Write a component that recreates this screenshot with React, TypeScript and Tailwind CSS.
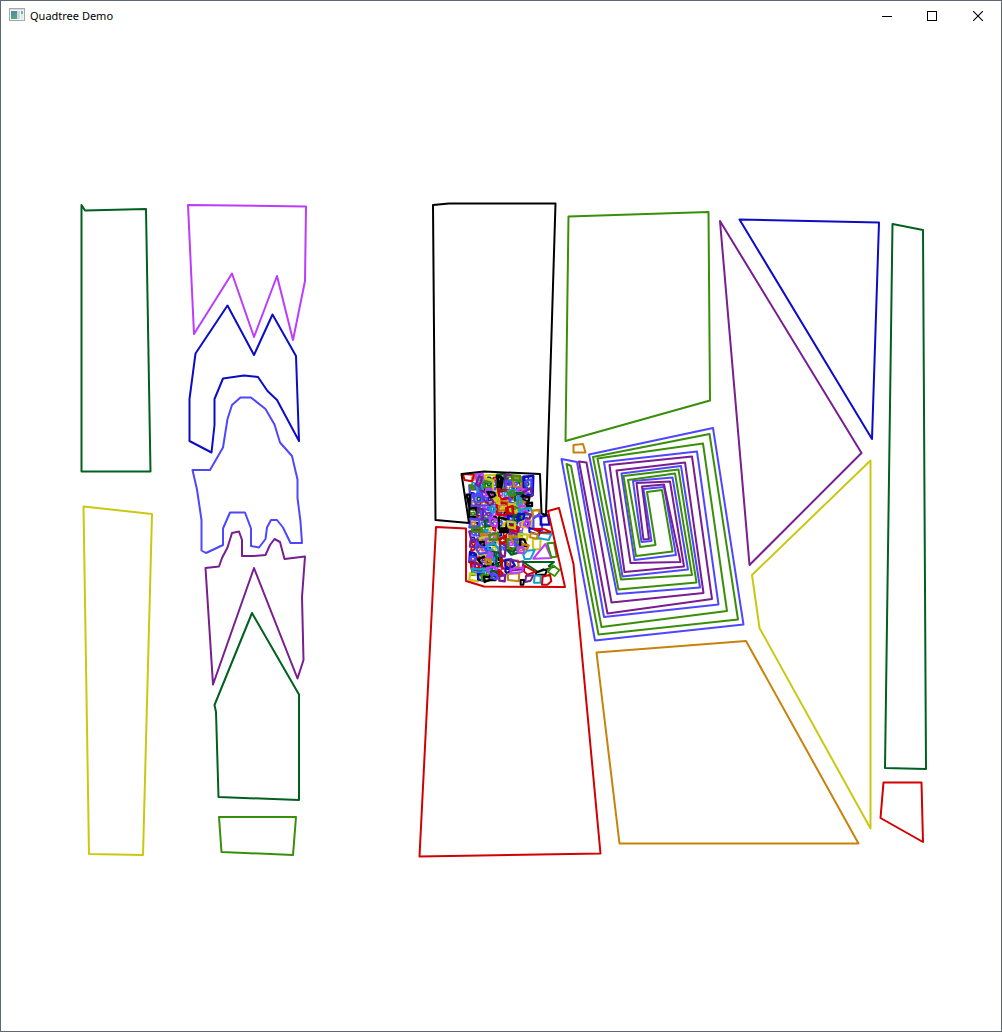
const INK = {
  black: "#000000",
  red: "#d20000",
  forest: "#006020",
  green: "#3a8f0a",
  olive: "#cbc814",
  orange: "#c8820c",
  navy: "#0c0cc8",
  blue: "#4f46ff",
  purple: "#781e91",
  magenta: "#bb3cff",
  cyan: "#14a0c8",
};

type Ink = keyof typeof INK;
type Shape = [Ink, string];

const SHAPES: Shape[] = [
  ["forest", "81.5,205 85,210.5 146,209 150.5,471.5 81.5,471.5"],
  ["olive", "83.5,506.5 152,514 143,855 89,854"],
  ["magenta", "188,205 306,206.5 305,281 293,340 277,276 254,337 232,273.5 194,334"],
  ["navy", "195.5,353.5 227.5,305.5 254,355 272.5,314.5 296,356 299,441 277,400 267.5,391 258,377 244,375.5 223,378.5 214.5,399 214.5,425 211.5,452.5 189.5,441 189.5,399"],
  ["blue", "240.5,397.5 251,397.5 265.5,409 274.5,424.5 280,442.5 292,456 297.5,479.5 297.5,498 300.5,521.5 302,543 290.5,543 283,527.5 277,520 271,520 267,527.5 265.5,539 259,547.5 251,546 251,528.5 245,512.5 230,512.5 223,528.5 223,545 206,553 201.5,550.5 201.5,520 197,489.5 192.5,470 210,470 223,447.5 227.5,419 232,405"],
  ["purple", "205.5,568 219,566.5 222,558 227.5,547.5 232,533 239,531.5 242,540 242,556 254,556 265.5,555 270,545 274.5,539 280,542 284.5,559 305,556.5 302,597 303.5,660 297.5,678.5 254,568 213,684.5"],
  ["forest", "252,613 299,694.5 299,800 218.5,797 216,712 214.5,705"],
  ["green", "219,817 296,817 293,855 221.5,852"],
  ["black", "433,205 449,203.5 555.5,203.5 546,515 541.5,513.5 540,474 484,471.5 461.5,474 469,523 435.5,520"],
  ["red", "436,527 466,528.5 466,581 484,586.5 565,587 548,511 559,508 573.5,564 600.5,853.5 419.5,856.5"],
  ["green", "568.5,216.5 708.5,212 710,400.5 565.5,441"],
  ["purple", "720,221 861.5,453 749.5,565"],
  ["navy", "739.5,219.5 879,222.5 872,439"],
  ["olive", "870.5,460.5 870.5,828.5 759.5,628 752,575"],
  ["forest", "892.5,224 923,230 926,769 885,768"],
  ["red", "883.5,782.5 921.5,782.5 923,842 880.5,818"],
  ["orange", "596.5,652.5 746,641 858.5,843.5 619.5,843.5"],
  ["orange", "573.5,445 583,444 585.5,452.5 573.5,452.5"],
];

const SPIRAL: Shape[] = [
  ["blue", "561.5,459 595,640.5 743.5,624.5 713,428 589,454.5 617,594 700,587.5 681,466 621.5,473.5 634.5,560 676,555 664,487 643.5,489 651.5,541 641.5,542 633,481 672.5,477.5 688,569.5 622.5,576.5 604,462 697,451.5 718.5,604.5 604,617 577,462"],
  ["green", "566.5,464 598.5,634.5 738,619.5 709.5,434 593,457 618.5,589.5 696.5,582.5 678.5,469.5 623.5,476 636,556 672.5,551.5 662,490 647,492 655.5,545 640,547 628,480 675,473.5 692,575 621,579.5 597.5,458.5 703,443.5 727,611 601.5,627 571,466"],
  ["purple", "579,461.5 607.5,613.5 712,599 692,456.5 609.5,465 624.5,572 684,566.5 670,481.5 636.5,483 643.5,539.5 649,539 642,486.5 664,484.5 680.5,562 630.5,563 616.5,470.5 685,462.5 703.5,593 611.5,602.5 586.5,462.5"],
];

// Cluster coordinates are in thirds of a pixel from (450, 460).
const CLUSTER: Shape[] = [
  ["blue", "58,76 88,80 84,108 60,106"], ["cyan", "80,80 98,78 96,100 84,98"],
  ["magenta", "76,44 98,42 104,62 84,74"], ["purple", "88,48 96,52 88,80 78,72"],
  ["green", "100,66 128,58 128,80 106,84"], ["olive", "104,46 142,44 142,120 128,118 130,62 106,56"],
  ["blue", "60,112 84,104 110,114 114,136 62,138"], ["purple", "92,92 112,98 130,126 122,138 98,116"],
  ["blue", "68,106 92,98 98,124 76,128"], ["magenta", "108,88 124,86 126,108 110,106"],
  ["forest", "142,44 164,42 164,92 146,94"], ["black", "144,48 154,50 152,80 142,82"],
  ["purple", "168,44 186,46 188,66 166,72"], ["blue", "168,62 190,68 186,92 166,90"],
  ["red", "144,88 172,92 188,112 150,118"], ["orange", "152,124 174,124 176,150 146,152"],
  ["red", "140,126 176,132 172,166 142,164"], ["blue", "178,100 204,104 204,136 180,126"],
  ["olive", "176,132 202,134 200,156 182,154"], ["green", "188,142 208,144 212,170 188,166"],
  ["black", "58,146 78,144 82,170 58,172"], ["blue", "92,148 124,148 122,178 94,174"],
  ["purple", "84,146 100,148 98,178 80,178"], ["cyan", "126,138 138,148 128,158 120,148"],
  ["blue", "62,176 88,180 86,198 58,202"], ["forest", "104,182 118,180 130,196 106,200"],
  ["magenta", "118,172 144,180 142,200 122,194"], ["black", "146,172 172,178 168,210 148,208"],
  ["navy", "174,166 202,172 202,188 176,194"], ["cyan", "174,92 202,90 210,100 182,106"],
  ["orange", "188,54 216,52 214,82 192,80"], ["green", "188,46 210,48 212,64 190,60"],
  ["navy", "220,50 250,48 248,106 222,102"], ["blue", "228,64 244,58 244,90 230,86"],
  ["magenta", "204,84 228,90 224,116 206,112"], ["purple", "242,84 246,108 218,116 216,100"],
  ["forest", "196,102 218,98 214,120 194,122"], ["black", "218,106 238,112 236,124 216,120"],
  ["orange", "210,120 232,130 232,142 208,136"], ["cyan", "202,114 214,116 214,134 202,134"],
  ["magenta", "208,138 232,138 230,156 210,152"], ["black", "230,130 246,128 246,138 232,138"],
  ["cyan", "206,150 242,144 248,164 212,164"], ["orange", "248,152 268,150 268,168 246,170"],
  ["purple", "224,158 242,164 238,178 222,172"], ["red", "168,144 188,138 190,162 170,160"],
  ["forest", "192,166 210,164 208,182 194,184"], ["navy", "206,162 222,162 220,180 204,180"],
  ["blue", "250,176 268,162 276,198 276,212 256,210 250,204"], ["navy", "274,170 294,166 298,194 272,194"],
  ["olive", "218,184 244,182 242,204 216,200"], ["magenta", "228,182 240,186 236,202 222,194"],
  ["purple", "58,214 86,212 92,238 64,240"], ["purple", "62,242 88,244 84,262 60,260"],
  ["cyan", "98,212 112,210 110,222 98,220"], ["green", "66,204 92,204 98,216 68,214"],
  ["orange", "92,222 144,226 136,238 98,234"], ["olive", "90,234 120,232 118,244 92,246"],
  ["black", "90,246 104,246 102,260 90,258"], ["magenta", "108,236 132,240 124,252 108,252"],
  ["blue", "80,246 90,258 104,262 112,278 88,282 78,264"], ["green", "118,224 144,220 144,238 120,240"],
  ["cyan", "110,256 132,250 146,266 144,288 128,300 110,290 124,284 128,270 116,268"],
  ["forest", "126,276 148,278 154,316 138,318 140,292"], ["magenta", "116,276 128,280 124,294 112,290"],
  ["navy", "60,276 78,284 74,312 58,306"], ["blue", "62,290 76,292 74,304 60,302"],
  ["black", "84,298 102,290 112,310 130,312 126,322 98,318"], ["orange", "106,296 122,300 122,312 108,310"],
  ["red", "62,306 86,312 88,330 66,330"], ["purple", "74,310 96,316 94,336 76,330"],
  ["cyan", "66,326 88,328 104,326 100,338 72,338"], ["olive", "60,340 88,346 84,364 58,360"],
  ["navy", "84,342 102,344 98,362 84,358"], ["green", "94,344 120,346 118,362 96,360"],
  ["black", "102,350 118,352 122,344 138,348 136,360 118,360 104,366"], ["magenta", "110,324 134,320 140,338 118,340"],
  ["forest", "124,332 142,336 140,350 124,346"], ["blue", "124,342 142,346 140,358 126,354"],
  ["red", "152,296 174,312 176,324 158,326"], ["red", "146,330 158,340 148,348"],
  ["purple", "148,350 166,344 164,364 148,362"], ["purple", "150,248 168,256 164,290 152,288"],
  ["red", "148,238 168,230 168,248 152,248"], ["green", "172,238 200,232 204,258 184,272 174,260"],
  ["orange", "176,228 202,230 192,248"], ["forest", "172,270 190,276 200,264 206,278 184,284"],
  ["orange", "168,302 204,302 206,322 174,318"], ["navy", "166,300 184,298 194,316 178,326 166,318"],
  ["black", "154,206 176,204 174,216 150,216"], ["purple", "180,204 206,204 204,222 182,218"],
  ["red", "184,196 204,202 202,214 186,212"], ["olive", "206,222 234,224 230,240 208,236"],
  ["blue", "194,240 210,238 214,256 196,256"], ["black", "210,238 222,238 232,260 210,254"],
  ["orange", "218,252 236,256 230,270 216,264"], ["magenta", "202,264 220,262 222,280 204,278"],
  ["navy", "168,324 184,328 172,340 166,334"], ["black", "112,96 132,98 136,108 122,112"],
  ["black", "140,48 158,56 154,84"], ["black", "50,104 60,104 58,142"],
  ["green", "60,76 70,78 70,88 62,86"], ["green", "174,100 190,92 196,104 182,108"],
  ["olive", "138,112 148,116 148,132 140,128"], ["olive", "172,184 196,188 194,204 176,202"],
];

const CLUSTER_EDGE: Shape[] = [
  ["red", "38,42 72,44 66,64 44,60"],
  ["olive", "248,238 272,236 270,268 250,268"], ["cyan", "270,218 304,222 296,240 264,234"],
  ["navy", "238,204 270,212 266,224 238,216"], ["orange", "242,220 264,222 260,236 240,232"],
  ["red", "252,206 284,208 302,216 270,218"], ["magenta", "286,252 304,294 250,296"],
  ["green", "292,250 312,248 320,290 304,292"], ["cyan", "232,272 254,270 242,296 224,298 220,284"],
  ["purple", "182,298 208,306 220,304 218,328 180,332"],
  ["forest", "220,306 312,306 296,318 314,320 264,336"],
  ["black", "258,338 280,328 290,332 286,344 258,344"], ["green", "308,316 328,330 314,348 294,336"],
  ["red", "222,316 256,336 232,344 222,334"], ["orange", "174,342 208,340 206,364 174,360"],
  ["magenta", "182,328 220,322 216,336 184,340"], ["purple", "228,348 250,346 242,362 226,366"],
  ["cyan", "254,346 272,348 272,368 252,368"], ["red", "278,350 300,344 304,364 292,374 276,374"],
  ["black", "212,360 222,360 220,374 212,374"],
];

// Small cells packed between the larger members of the cluster.
function packedCells(): Shape[] {
  const inks: Ink[] = ["blue", "purple", "forest", "navy", "magenta", "olive", "cyan", "red", "green", "blue", "orange", "black"];
  const cells: Shape[] = [];
  let seed = 29;
  const next = (n: number) => {
    seed = (seed * 1103515245 + 12345) % 2147483648;
    return Math.floor((seed / 2147483648) * n);
  };
  for (let y = 50; y < 350; y += 15) {
    const right = y < 165 ? 236 : y < 200 ? 228 : y < 265 ? 210 : 150;
    for (let x = 62; x < right; x += 16) {
      const ink = inks[next(inks.length)];
      const a = `${x + next(6)},${y + next(5)}`;
      const b = `${x + 10 + next(6)},${y + next(5)}`;
      const c = `${x + 10 + next(6)},${y + 9 + next(5)}`;
      const d = `${x + next(6)},${y + 9 + next(5)}`;
      cells.push([ink, `${a} ${b} ${c} ${d}`]);
    }
  }
  return cells;
}

const PACKED = packedCells();

function Outline({ shapes, width }: { shapes: Shape[]; width: number }) {
  return (
    <g fill="none" strokeWidth={width} strokeLinejoin="round">
      {shapes.map(([ink, points], i) => (
        <polygon key={i} points={points} stroke={INK[ink]} />
      ))}
    </g>
  );
}

function AppIcon() {
  return (
    <svg className="size-4 shrink-0" viewBox="0 0 16 16" aria-hidden="true">
      <defs>
        <linearGradient id="pane" x1="0" y1="0" x2="0.4" y2="1">
          <stop offset="0" stopColor="#4c84b0" />
          <stop offset="1" stopColor="#58a878" />
        </linearGradient>
      </defs>
      <rect x="0.5" y="0.5" width="15" height="12" fill="#f4f5f6" stroke="#a4a9ae" />
      <rect x="1" y="1" width="14" height="1" fill="#d5dade" />
      <rect x="2" y="3" width="6" height="8" fill="url(#pane)" />
      <rect x="8" y="3" width="3" height="8" fill="#c7dcda" />
      <rect x="12" y="3" width="2" height="3" fill="#7fa9c2" />
      <rect x="12" y="6" width="2" height="5" fill="#e2e6e6" />
    </svg>
  );
}

function TitleBar() {
  return (
    <header className="flex h-[30px] shrink-0 items-center pl-2">
      <AppIcon />
      <h1 className="ml-[5px] flex-1 font-['Noto_Sans','Open_Sans',sans-serif] text-[11px] leading-4 text-black">
        Quadtree Demo
      </h1>
      <div className="flex h-full">
        <button type="button" aria-label="Minimize" className="flex w-11 items-center justify-center">
          <svg width="10" height="10" shapeRendering="crispEdges"><path d="M0 5.5H10" stroke="black" /></svg>
        </button>
        <button type="button" aria-label="Maximize" className="flex w-[46px] items-center justify-center">
          <svg width="10" height="10" shapeRendering="crispEdges"><rect x="0.5" y="0.5" width="9" height="9" fill="none" stroke="black" /></svg>
        </button>
        <button type="button" aria-label="Close" className="flex w-[46px] items-center justify-center">
          <svg width="10" height="10"><path d="M0 0L10 10M10 0L0 10" stroke="black" strokeWidth="1.1" /></svg>
        </button>
      </div>
    </header>
  );
}

export default function App() {
  return (
    <div className="flex h-screen flex-col border border-[#5f6873] bg-white">
      <TitleBar />
      <main className="min-h-0 flex-1">
        <svg className="block size-full" viewBox="1 31 1000 1000" role="img" aria-label="Polygon map">
          <g transform="translate(450 460) scale(0.33333)">
            <Outline shapes={PACKED} width={5} />
            <Outline shapes={CLUSTER} width={7} />
            <Outline shapes={CLUSTER_EDGE} width={6} />
          </g>
          <Outline shapes={SHAPES} width={2} />
          <Outline shapes={SPIRAL} width={2} />
        </svg>
      </main>
    </div>
  );
}
